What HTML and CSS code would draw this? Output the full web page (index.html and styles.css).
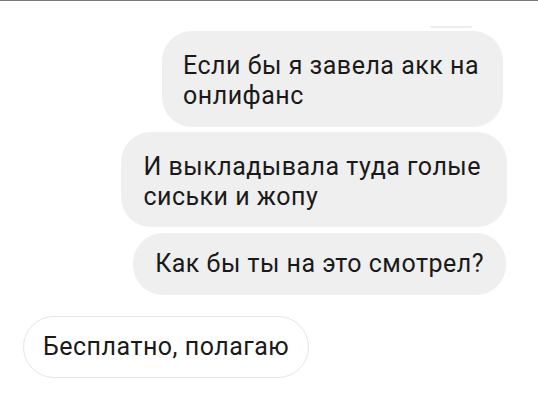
FILE: index.html
```html
<!DOCTYPE html>
<html lang="ru">
<head>
<meta charset="utf-8">
<title>Chat</title>
<link rel="stylesheet" href="styles.css">
</head>
<body>
<div class="screen">
  <div class="remnant"></div>
  <div class="thread">
    <div class="bubble out b1">Если бы я завела акк на<br>онлифанс</div>
    <div class="bubble out b2">И выкладывала туда голые<br>сиськи и жопу</div>
    <div class="bubble out b3">Как бы ты на это смотрел?</div>
    <div class="bubble in b4">Бесплатно, полагаю</div>
  </div>
</div>
</body>
</html>
```
FILE: styles.css
```css
html, body {
  margin: 0;
  padding: 0;
  background: #ffffff;
}
.screen {
  width: 538px;
  height: 400px;
  border-top: 1px solid #7a7a7a;
  box-sizing: border-box;
  overflow: hidden;
  font-family: Roboto, "Noto Sans", sans-serif;
  color: #1a1a1a;
}
.remnant {
  width: 42px;
  height: 2px;
  background: #ececec;
  margin: 25px 0 0 430px;
  border-radius: 1px;
}
.thread {
  display: flex;
  flex-direction: column;
  align-items: flex-end;
  margin-top: 3px;
}
.bubble {
  font-size: 25px;
  line-height: 30px;
  letter-spacing: 0.5px;
  white-space: nowrap;
  box-sizing: border-box;
}
.out {
  background: #efefef;
  border-radius: 30px;
}
.in {
  align-self: flex-start;
  background: #ffffff;
  border: 1px solid #e6e6e6;
  border-radius: 31px;
}
.b1 {
  padding: 20px 24px 16px 21px;
  margin-right: 35px;
}
.b2 {
  padding: 20px 26px 15px 22px;
  margin-top: 5px;
  margin-right: 31px;
}
.b3 {
  padding: 16px 22px 16px 22px;
  margin-top: 6px;
  margin-right: 32px;
}
.b4 {
  padding: 15px 19px 15px 19px;
  margin-top: 21px;
  margin-left: 23px;
}
```
